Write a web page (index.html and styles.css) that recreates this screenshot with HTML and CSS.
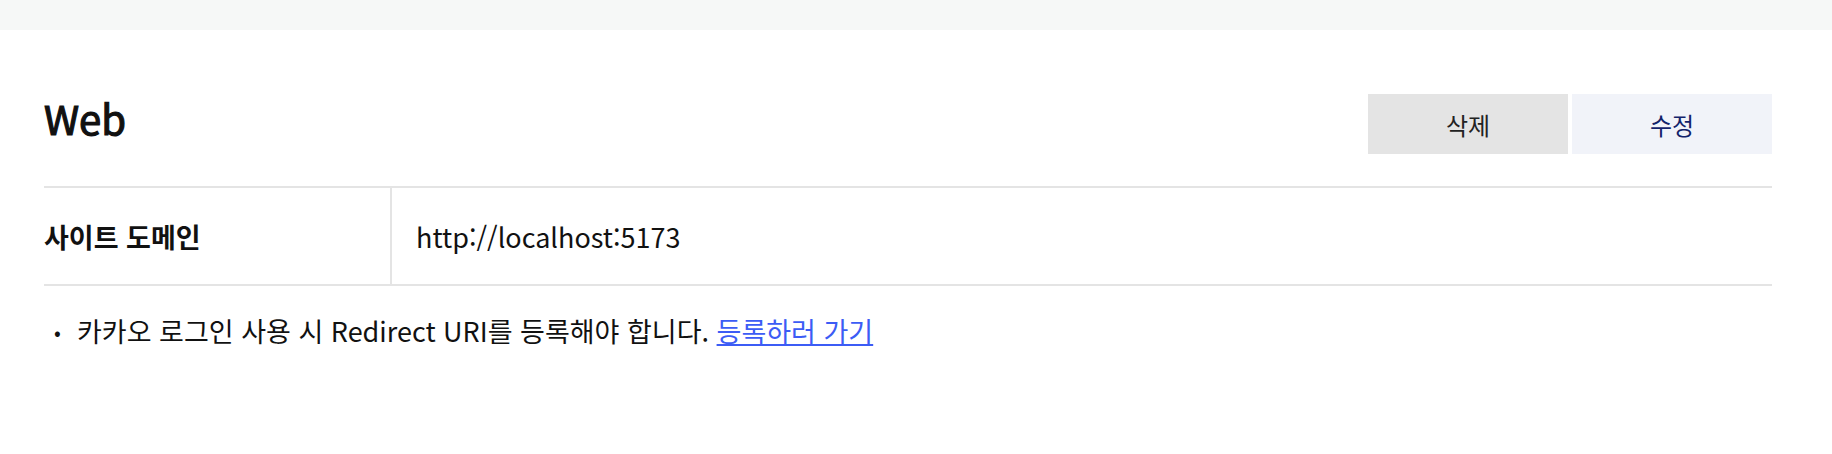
FILE: index.html
```html
<!DOCTYPE html>
<html lang="ko">

<head>
    <meta charset="UTF-8">
    <meta name="viewport" content="width=device-width, initial-scale=1.0">
    <title>Web</title>
    <link rel="stylesheet" href="styles.css">
</head>

<body>
    <div class="top-bar"></div>

    <div class="container">
        <div class="header">
            <h1>Web</h1>
            <div class="buttons">
                <button type="button" class="btn btn-delete">삭제</button>
                <button type="button" class="btn btn-edit">수정</button>
            </div>
        </div>

        <div class="info-table">
            <div class="info-row">
                <div class="info-label">사이트 도메인</div>
                <div class="info-value">http://localhost:5173</div>
            </div>
        </div>

        <ul class="notes">
            <li>카카오 로그인 사용 시 Redirect URI를 등록해야 합니다. <a href="#">등록하러 가기</a></li>
        </ul>
    </div>
</body>

</html>
```

FILE: styles.css
```css
body {
    font-family: "Noto Sans CJK KR", "Noto Sans", sans-serif;
    background-color: #fff;
    color: #111;
    margin: 0;
    padding: 0;
}

.top-bar {
    height: 30px;
    background-color: #f6f8f7;
}

.container {
    padding: 0 60px 0 44px;
}

.header {
    display: flex;
    justify-content: space-between;
    align-items: flex-start;
    margin-top: 64px;
}

h1 {
    margin: 0;
    font-size: 40px;
    font-weight: 400;
    line-height: 48px;
    -webkit-text-stroke: 1.2px currentColor;
}

.buttons {
    display: flex;
    gap: 4px;
}

.btn {
    width: 200px;
    height: 60px;
    border: none;
    border-radius: 0;
    font-family: inherit;
    font-size: 24px;
    cursor: pointer;
}

.btn-delete {
    background-color: #e4e4e4;
    color: #222;
}

.btn-edit {
    background-color: #f1f3f9;
    color: #13236b;
}

.info-table {
    margin-top: 32px;
    border-top: 2px solid #e4e4e4;
    border-bottom: 2px solid #e4e4e4;
}

.info-row {
    display: flex;
    height: 96px;
}

.info-label {
    width: 346px;
    border-right: 2px solid #e4e4e4;
    display: flex;
    align-items: center;
    font-size: 27px;
    font-weight: 700;
}

.info-value {
    display: flex;
    align-items: center;
    padding-left: 24px;
    font-size: 27px;
}

.notes {
    list-style: none;
    margin: 0;
    padding: 25px 0 0 10px;
    font-size: 27px;
}

.notes li::before {
    content: "•";
    display: inline-block;
    width: 23px;
    font-size: 20px;
    vertical-align: 2px;
}

.notes a {
    color: #3c5cf5;
}
```
